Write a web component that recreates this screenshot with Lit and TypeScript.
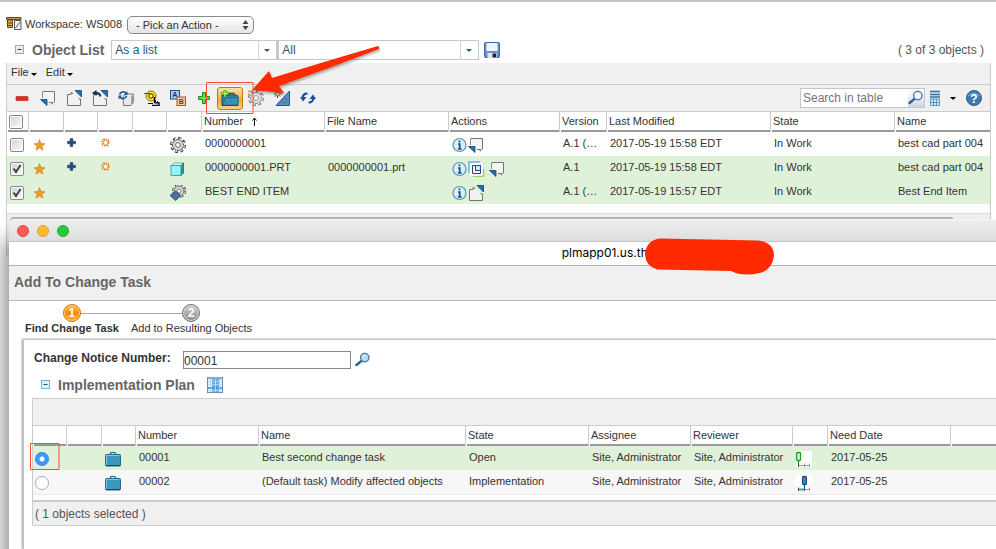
import { LitElement, html, svg, css, nothing } from "lit";
import { customElement, property } from "lit/decorators.js";

const pageIn = svg`<path d="M3 1.5H14.5V12H13L12.5 14H12V12.5H9" fill="none" stroke="#77766a"/><path d="M3.5 2H14V12H8L3.5 8Z" fill="#f4f4f4"/><path d="M2.5 8V1.5" stroke="#8d8c80"/><path d="M0.5 9.5H7V15.5Z" fill="#1d6fb8" stroke="#17436f" stroke-width=".8"/>`;
const pageOut = svg`<path d="M7 3.5H6V2.5H5V4.5H1.5V15.5H14.5V9H13V8" fill="#f1f1f1" stroke="#77766a"/><path d="M9 .5H15.5V7Z" fill="#1d6fb8" stroke="#17436f" stroke-width=".8"/>`;
const gear = svg`<circle cx="8" cy="8" r="6.6" fill="none" stroke="#3a3a3a" stroke-width="2.8" stroke-dasharray="3 2.18"/><circle cx="8" cy="8" r="5.5" fill="#dcdcd8" stroke="#555" stroke-width="1"/><circle cx="8" cy="8" r="6.3" fill="none" stroke="#deded9" stroke-width="1.800" stroke-dasharray="1.600 3.350" stroke-dashoffset="-.7"/><circle cx="8" cy="8" r="2.400" fill="#fff" stroke="#666" stroke-width="1"/>`;
const briefcase = svg`<path d="M5.500 4V2.500Q5.500 1.500 6.500 1.500H9.500Q10.500 1.500 10.500 2.500V4" fill="none" stroke="#1c5a74" stroke-width="1.200"/><rect x=".5" y="3.500" width="15" height="11.500" rx="1" fill="#3f97bd" stroke="#246a88"/><path d="M1.500 14V4.500H14" fill="none" stroke="#86c8e2"/><path d="M1 14.500H15" stroke="#174b62"/>`;
const glass = (lens: string) => svg`<path d="M1.500 13L6.500 8.800" stroke="#2d5f8e" stroke-width="2.400" stroke-linecap="round"/><circle cx="9.800" cy="5.600" r="4.200" fill=${lens} stroke="#3f76aa" stroke-width="1.300"/><path d="M7.500 5.500Q8 3.500 10 3.300" fill="none" stroke="#fff"/>`;

const ICONS: Record<string, unknown> = {
  workspace: svg`<path d="M.5 2.500H15V4.500H.5Z" fill="#c99a4a" stroke="#6b4316"/><path d="M1.500 5H6.500V12.500H1.500Z" fill="#e0aa52" stroke="#6b4316"/><path d="M2 8H6M2 10.500H6" stroke="#6b4316"/><path d="M8.500 5.500H15V14.500H8.500Z" fill="#f3f3f3" stroke="#555"/><path d="M9.500 13L14 7" stroke="#555"/>`,
  collapse: svg`<rect x=".5" y=".5" width="8" height="8" fill="#e2eff6" stroke="#7fb4cd"/><path d="M2.500 4.500H6.500" stroke="#174f7a"/>`,
  save: svg`<rect x=".5" y=".5" width="15" height="15" rx="1" fill="#6d92c6" stroke="#41669c"/><rect x="2.500" y="1" width="11" height="8" fill="#eef3f8"/><rect x="3.500" y="11" width="9" height="5" fill="#dfe5ec"/><rect x="8.500" y="11.500" width="3.500" height="4" fill="#1b2330"/>`,
  minus: svg`<rect x="2" y="6.500" width="12" height="4" rx=".6" fill="#df2b20" stroke="#b51b12" stroke-width=".6"/>`,
  pageIn,
  pageOut,
  undo: svg`${pageOut}<path d="M8.500 6.500Q8 3 3.500 3" fill="none" stroke="#15324d" stroke-width="2"/><path d="M0 3L4.500 0V6Z" fill="#15324d"/>`,
  updateBox: svg`<path d="M5 6.500L8 4H15.500V12L13 15.500H5.500Z" fill="#e9e9e5" stroke="#777"/><path d="M13 7V15L15.500 12V4Z" fill="#a3a39c"/><path d="M1.500 4.500A3.600 3.600 0 0 1 8 3.500M8.500 6A3.600 3.600 0 0 1 2 7" fill="none" stroke="#17528f" stroke-width="1.500"/><path d="M9.500 1V5H6ZM.5 9.500V5.500H4Z" fill="#17528f"/>`,
  tape: svg`<circle cx="7" cy="6" r="5" fill="#ffe600" stroke="#8a7a00"/><circle cx="7" cy="6" r="2.200" fill="#fff8a8" stroke="#222"/><path d="M0 3.500H6" stroke="#665a00"/><path d="M10.500 7V12.500L15 13V15.500H8" fill="none" stroke="#111" stroke-width="1.500"/><path d="M4 13.500H9M11.500 10V12M13.500 11V13" stroke="#111"/>`,
  ab: svg`<rect x=".5" y=".5" width="9" height="8.500" fill="#a9c9e6" stroke="#1e4e86"/><text x="2.200" y="7.400" font-size="7" font-weight="700" font-family="Liberation Sans, sans-serif" fill="#123a6c">A</text><rect x="7" y="7" width="8.500" height="8.500" fill="#f1cfa4" stroke="#96592a"/><text x="8.800" y="14" font-size="7" font-weight="700" font-family="Liberation Sans, sans-serif" fill="#7b3410">B</text>`,
  plus: svg`<path d="M6.500 2.500H9.500V6.500H13.500V9.500H9.500V13.500H6.500V9.500H2.500V6.500H6.500Z" fill="#5de047" stroke="#1c8d15"/>`,
  folderAdd: svg`<path d="M1 5H15Q17 5 17 7V15.500H1Z" fill="#2b7fa8" stroke="#15506f"/><path d="M8 5V3.500H13V5" fill="none" stroke="#15506f" stroke-width="1.400"/><path d="M2.500 14.500L4 8H18L16.500 15H2.500Z" fill="#3a8fb8" stroke="#1f6688" stroke-width=".7"/><path d="M3 0H5V2.500H7.500V4.500H5V7H3V4.500H.5V2.500H3Z" fill="#b8f58a" stroke="#2f9b16" stroke-width=".8"/>`,
  gearNew: svg`<g opacity=".65">${gear}</g><path d="M0 1L2 2M3 0V2M0 4H2M5 1L4 3M1 6L2 5" stroke="#f07b1f" stroke-width="1.200"/>`,
  square: svg`<path d="M15.500 1V15.500H2Z" fill="#5b8cc0" stroke="#2a5590"/><path d="M12 8.500V12H8.500Z" fill="#f0f0f0" stroke="#2a5590"/><path d="M3.500 0V8M0 4H7.500M1 1.500L6 6.500M6 1.500L1 6.500" stroke="#222" stroke-width=".9"/><circle cx="3.500" cy="4" r="1.500" fill="#ffe94a"/>`,
  refresh: svg`<path d="M2.500 8Q3 3.500 7.500 3.500M13.500 8Q13 12.500 8.500 12.500" fill="none" stroke="#164f9c" stroke-width="2.200"/><path d="M0 7H6.500L3 11.500ZM9.500 9H16L13 4.500Z" fill="#164f9c"/>`,
  glass: glass("#f2f8fd"),
  glassFilled: glass("#b7dcf2"),
  views: svg`<rect x="0" y="0" width="10" height="16" fill="#d4e9f6"/><path d="M0 1.500H10M0 4.500H10M0 7H10" stroke="#41708f" stroke-width="1.500"/><path d="M.5 9V15.500H9.500V9ZM3.500 9V16M6.500 9V16M0 12.500H10" fill="none" stroke="#4e9dcb"/>`,
  help: svg`<circle cx="8" cy="8" r="7.500" fill="#3f79ab" stroke="#2b5f90"/><path d="M2 6Q8 1 14 6" fill="none" stroke="#88b4d6"/><text x="8" y="12.500" text-anchor="middle" font-size="12" font-weight="700" font-family="Liberation Sans, sans-serif" fill="#fff">?</text>`,
  star: svg`<path d="M7.500 2.500L9 6.500L13 6.800L9.900 9.300L11 13.200L7.500 11L4 13.200L5.100 9.300L2 6.800L6 6.500Z" fill="#efa02c" stroke="#c37c1e" stroke-width=".6"/>`,
  cross: svg`<path d="M3.200 1.500H5.800V4.200H8.500V6.800H5.800V9.500H3.200V6.800H.5V4.200H3.200Z" fill="#1f4f80" stroke="#143559" stroke-width=".5"/>`,
  sun: svg`<circle cx="4.500" cy="5.500" r="3" fill="#fff6d8" stroke="#ed5a1c" stroke-width="2" stroke-dasharray="1.300 1.050"/><path d="M1 2H2M7 2H8M1 9H2M7 9H8" stroke="#f3a12c"/>`,
  gear,
  cube: svg`<path d="M1 5L4 2H13.500L11 5Z" fill="#d2ffff" stroke="#3e8b8b" stroke-width=".7"/><path d="M11 5L13.500 2V12L11 14.500Z" fill="#2e9ea0" stroke="#1b5556" stroke-width=".7"/><rect x="1" y="4.500" width="10" height="10" fill="#8ef6fa" stroke="#3e8b8b" stroke-width=".8"/>`,
  gearPart: svg`<g transform="translate(2 -1) scale(.88)">${gear}</g><path d="M0 10.500L5.500 6L11 10.500L5.500 15.500Z" fill="#4f6f9f" stroke="#2b4168" stroke-width=".8"/>`,
  info: svg`<circle cx="7.500" cy="8" r="6.500" fill="#d8eefa" stroke="#5b93b5" stroke-width="1.200"/><path d="M7.500 3.500V5.200M6 7H7.700V12M5.800 12H9.600" fill="none" stroke="#174e7d" stroke-width="1.700"/>`,
  visual: svg`<rect x="1" y="1" width="14.500" height="14.500" fill="#fff" stroke="#cfe6f2"/><path d="M1 12V1H12" fill="none" stroke="#62b1ea" stroke-width="1.400"/><path d="M15.500 8V15.500H5" fill="none" stroke="#9bd05b" stroke-width="1.400"/><path d="M4.500 4.500H12.500V12.500H4.500Z" fill="#f5f5f5" stroke="#444"/><rect x="7.500" y="4.500" width="5" height="5" fill="#cfe0ff" stroke="#2343b0"/>`,
  grid: svg`<rect x="0" y="0" width="16" height="16" fill="#e4f0fa"/><path d="M6.500 2V15M10.500 2V15" stroke="#62b0e0" stroke-width="3"/><path d="M0 11H15" stroke="#4a9fd4" stroke-width="2"/><path d="M0 4.500H15M0 7.500H15M0 13.500H15M3.500 2V15M8.500 2V15M12.500 2V15" stroke="#b9d4ea" stroke-width=".8"/><path d="M0 1H16" stroke="#8fa8c9" stroke-width="2"/><path d="M.5 0V16M15.500 0V16M0 15.500H16" stroke="#6c8bb5"/>`,
  briefcase,
  gateOpen: svg`<rect width="16" height="16" fill="#fff"/><path d="M3 14.500H14M8.500 12.500V16M13.500 12.500V16" fill="none" stroke="#999"/><path d="M2.500 9V16" stroke="#1c661c"/><rect x=".7" y="1.500" width="3.800" height="8" rx="1" fill="#d9ffd9" stroke="#16a016" stroke-width="1.300"/>`,
  gateRun: svg`<rect width="16" height="16" fill="#fff"/><path d="M3 14.500H8" stroke="#2fbf62" stroke-width="2"/><path d="M9 14.500H14M13.500 12.500V16" stroke="#999"/><path d="M2.500 12.500V16" stroke="#1c661c"/><path d="M8.500 9V16" stroke="#174a8c"/><rect x="6.600" y="1.500" width="3.800" height="8" rx="1" fill="#5583b8" stroke="#174a8c" stroke-width="1.300"/>`,
};

const SIZES: Record<string, [number, number]> = {
  collapse: [9, 9],
  views: [10, 16],
  folderAdd: [18, 16],
  visual: [21, 16],
};

function icon(name: string) {
  const [w, h] = SIZES[name] ?? [16, 16];
  return html`<svg class="icon" width=${w} height=${h} viewBox="0 0 ${w} ${h}" aria-hidden="true">${ICONS[name]}</svg>`;
}

const base = css`
  * { box-sizing: border-box; }
  .icon { display: block; flex: none; }
  button { display: flex; align-items: center; justify-content: center; padding: 0; border: 0; background: none; font: inherit; color: inherit; }
  h1, h2 { margin: 0; font-size: 14px; line-height: 18px; font-weight: 700; color: #666; white-space: nowrap; }
  input, select { font-family: inherit; margin: 0; border-radius: 0; }
  .caret { border: 3px solid transparent; border-top-color: currentColor; border-bottom: 0; }
  table { width: 100%; border-collapse: separate; border-spacing: 0; table-layout: fixed; background: #fff; }
  th { height: 20px; padding: 0; text-align: left; font-weight: 400; color: #333; border-right: 1px solid #ccc; }
  th:last-child { border-right: 0; }
  .head { display: flex; align-items: center; height: 20px; margin-left: 1px; padding: 1px 0 0 1px; border-bottom: 2px solid #999; line-height: 17px; white-space: nowrap; }
  td { height: 24px; padding: 0 0 0 3px; vertical-align: top; line-height: 22px; color: #333; white-space: nowrap; overflow: hidden; }
  .icons { display: flex; align-items: center; height: 24px; padding-top: 1px; }
  .selected td { background: #dff2d9; }
`;

interface ObjectRow {
  checked: boolean; flags: boolean; kind: string; number: string; file: string;
  actions: string[]; version: string; modified: string; name: string;
}

const OBJECTS: ObjectRow[] = [
  { checked: false, flags: true, kind: "gear", number: "0000000001", file: "", actions: ["info", "pageIn"], version: "A.1 (…", modified: "2017-05-19 15:58 EDT", name: "best cad part 004" },
  { checked: true, flags: true, kind: "cube", number: "0000000001.PRT", file: "0000000001.prt", actions: ["info", "visual", "pageIn"], version: "A.1", modified: "2017-05-19 15:58 EDT", name: "best cad part 004" },
  { checked: true, flags: false, kind: "gearPart", number: "BEST END ITEM", file: "", actions: ["info", "pageOut"], version: "A.1 (…", modified: "2017-05-19 15:57 EDT", name: "Best End Item" },
];

const TOOLS: [string, string][] = [
  ["minus", "Remove"], ["pageIn", "Check out"], ["pageOut", "Check in"], ["undo", "Undo checkout"],
  ["updateBox", "Update"], ["tape", "Measure"], ["ab", "Rename"], ["plus", "Add"],
  ["folderAdd", "Add to change task"], ["gearNew", "New part"], ["square", "New CAD document"], ["refresh", "Refresh"],
];

@customElement("object-list")
export class ObjectList extends LitElement {
  static styles = [base, css`
    :host { display: block; padding: 12px 5px 0 6px; color: #333; }
    .workspace { display: flex; align-items: center; height: 22px; gap: 3px; }
    .workspace label { padding-bottom: 2px; }
    .workspace .icon { margin-bottom: 4px; }
    .workspace .pick { margin-left: 2px; }
    .pick, .combo { position: relative; display: flex; }
    .pick select { appearance: none; width: 127px; height: 18px; padding: 0 8px 1px; border: 1px solid #8b8b8b; border-radius: 5px; background: linear-gradient(#fff, #e4e4e4); color: #333; font-size: 11px; }
    .pick svg { position: absolute; right: 5px; top: 4px; pointer-events: none; }
    .title { display: flex; align-items: center; height: 27px; padding: 0 7px 0 9px; }
    .title h1 { margin: 0 7px 0 8px; }
    .combo select { appearance: none; height: 20px; padding: 0 24px 0 3px; border: 1px solid #c8c8c8; background: #fff; color: #285a74; font-size: 12px; }
    .combo .caret { position: absolute; right: 7px; top: 9px; color: #285a74; }
    .combo::after { content: ""; position: absolute; right: 18px; top: 0; height: 20px; border-left: 1px solid #d5d5d5; }
    .view select { width: 166px; }
    .filter select { width: 202px; border-left-width: 2px; }
    .title .save { margin-left: 5px; }
    .count { margin-left: auto; font-size: 12px; color: #555; }
    .box { border: 1px solid #ccc; border-top: 0; background: #f0f0f0; }
    .menu { display: flex; height: 22px; padding: 0 4px; gap: 9px; border-bottom: 1px solid #ccc; }
    .menu button { gap: 2px; padding-bottom: 4px; }
    .menu .caret { color: #000; margin-top: 5px; }
    .tools { display: flex; align-items: center; height: 27px; padding: 0 8px 0 2px; border-bottom: 1px solid #ccc; }
    .tool { width: 26px; height: 23px; }
    .tool.active { border: 1px solid #b97a1c; border-radius: 3px; background: linear-gradient(#fde3ae, #f6a832 60%, #fdd384); }
    .search { display: flex; margin-left: auto; border: 1px solid #c6c6c6; background: #fff; height: 20px; }
    .search input { width: 107px; padding: 0 2px; border: 0; font-size: 12px; background: none; }
    .search input::placeholder { color: #757575; }
    .search button { width: 16px; background: linear-gradient(#fff, #cfd6e6); }
    .views { margin: 0 10px 0 5px; }
    .tools .caret { color: #000; margin-right: 10px; }
    .check { appearance: none; display: block; width: 14px; height: 14px; border: 1px solid #888; border-radius: 2px; background: linear-gradient(135deg, #d0d0d0, #fff); box-shadow: inset 0 0 0 1px #fff; }
    .tick { display: grid; width: 14px; height: 14px; }
    .tick > * { grid-area: 1 / 1; }
    .tick svg { pointer-events: none; z-index: 1; }
    .sort { margin-left: 8px; }
    .space { height: 10px; background: #fdfdfd; border-bottom: 1px solid #ddd; }
    .scroll { height: 16px; padding: 3px 36px 0 3px; border-bottom: 1px solid #ccc; }
    .thumb { height: 8px; border-radius: 4px; background: #b4b4b4; }
    .foot { height: 24px; }
  `];

  private check(checked: boolean, label: string) {
    return html`<span class="tick"><input class="check" type="checkbox" .checked=${checked} aria-label=${label} />${checked
      ? html`<svg width="14" height="14"><path d="M3.500 6.500L6 10L10.500 3" fill="none" stroke="#444" stroke-width="2"/></svg>` : nothing}</span>`;
  }

  render() {
    const widths = [22, 35, 34, 35, 34, 35, 123, 124, 111, 47, 164, 124];
    const heads = ["", "", "", "", "", "Number", "File Name", "Actions", "Version", "Last Modified", "State", "Name"];
    return html`
      <div class="workspace">
        ${icon("workspace")}
        <label for="action">Workspace: WS008</label>
        <span class="pick">
          <select id="action"><option>- Pick an Action -</option></select>
          <svg width="7" height="10"><path d="M3.500 0L6.500 4H.5ZM3.500 10L6.500 6H.5Z" fill="#444"/></svg>
        </span>
      </div>
      <div class="title">
        <button aria-label="Collapse">${icon("collapse")}</button>
        <h1>Object List</h1>
        <span class="combo view"><select aria-label="View"><option>As a list</option></select><span class="caret"></span></span>
        <span class="combo filter"><select aria-label="Filter"><option>All</option></select><span class="caret"></span></span>
        <button class="save" aria-label="Save">${icon("save")}</button>
        <span class="count">( 3 of 3 objects )</span>
      </div>
      <div class="box">
        <div class="menu">
          <button>File<span class="caret"></span></button>
          <button>Edit<span class="caret"></span></button>
        </div>
        <div class="tools">
          ${TOOLS.map(([name, label]) => html`<button class="tool ${name === "folderAdd" ? "active" : ""}" aria-label=${label}>${icon(name)}</button>`)}
          <span class="search">
            <input type="text" placeholder="Search in table" aria-label="Search in table" />
            <button aria-label="Search">${icon("glass")}</button>
          </span>
          <button class="views" aria-label="Table views">${icon("views")}</button>
          <span class="caret"></span>
          <button aria-label="Help">${icon("help")}</button>
        </div>
        <table>
          <colgroup>${widths.map((w) => html`<col width=${w} />`)}<col /></colgroup>
          <thead><tr>
            <th><span class="head">${this.check(false, "Select all")}</span></th>
            ${heads.map((h) => html`<th><span class="head">${h}${h === "Number"
              ? html`<svg class="sort" width="7" height="9"><path d="M3.500 9V1M1.500 3.500L3.500 1L5.500 3.500" fill="none" stroke="#111"/></svg>` : nothing}</span></th>`)}
          </tr></thead>
          <tbody>${OBJECTS.map((o) => html`
            <tr class=${o.checked ? "selected" : ""}>
              <td><span class="icons">${this.check(o.checked, `Select ${o.number}`)}</span></td>
              <td><span class="icons">${icon("star")}</span></td>
              <td>${o.flags ? html`<span class="icons">${icon("cross")}</span>` : nothing}</td>
              <td>${o.flags ? html`<span class="icons">${icon("sun")}</span>` : nothing}</td>
              <td></td>
              <td><span class="icons">${icon(o.kind)}</span></td>
              <td>${o.number}</td>
              <td>${o.file}</td>
              <td><span class="icons">${o.actions.map(icon)}</span></td>
              <td>${o.version}</td>
              <td>${o.modified}</td>
              <td>In Work</td>
              <td>${o.name}</td>
            </tr>`)}
          </tbody>
        </table>
        <div class="space"></div>
        <div class="scroll"><div class="thumb"></div></div>
        <div class="foot"></div>
      </div>`;
  }
}

const TASKS = [
  { number: "00001", name: "Best second change task", state: "Open", gate: "gateOpen", selected: true },
  { number: "00002", name: "(Default task) Modify affected objects", state: "Implementation", gate: "gateRun", selected: false },
];

@customElement("change-task-window")
export class ChangeTaskWindow extends LitElement {
  static styles = [base, css`
    :host { display: flex; flex-direction: column; background: #fff; color: #333; border-radius: 5px 0 0 0; overflow: hidden; }
    .bar { display: flex; flex: none; align-items: center; gap: 8px; height: 23px; padding-left: 8px; background: linear-gradient(#eee, #dedede); border-top: 1px solid #f8f8f8; border-bottom: 1px solid #c4c4c4; }
    .light { width: 12px; height: 12px; border-radius: 50%; border: 1px solid; }
    .close { background: #fc5b57; border-color: #df4744; }
    .min { background: #fdbc2e; border-color: #de9f34; }
    .max { background: #28c93f; border-color: #1fab2f; }
    .address { flex: none; height: 24px; padding-left: 56%; border-bottom: 1px solid #b0b0b0; font: 12px/22px Inter, sans-serif; color: #000; }
    .banner { flex: none; height: 35px; padding: 7px 5px; background: #f0f0f0; border-bottom: 1px solid #b8b8b8; }
    .steps { display: flex; flex: none; gap: 12px; margin: 0; padding: 3px 16px 0; list-style: none; height: 38px; }
    .step { position: relative; display: flex; flex-direction: column; align-items: center; line-height: 12px; }
    .step.current { font-weight: 700; }
    .ball { position: relative; z-index: 1; display: grid; place-items: center; width: 18px; height: 18px; border-radius: 50%; color: #fff; font-size: 12px; font-weight: 700; border: 1px solid #707070; background: linear-gradient(#cfcfcf, #8b8b8b); box-shadow: inset 0 0 0 1px #ddd; }
    .current .ball { border-color: #d9730b; background: linear-gradient(#fdc05e, #f98a00 50%, #ffb400); box-shadow: inset 0 0 0 1px #fcd28c; }
    .current::after { content: ""; position: absolute; left: 50%; top: 9px; width: 112px; border-top: 1px solid #aaa; }
    .panel { flex: 1; margin-left: 14px; padding: 6px 0 0 8px; border: 1px solid #c4c4c4; border-right: 0; border-bottom: 0; box-shadow: -1px 0 2px #999; }
    .row { display: flex; align-items: center; height: 25px; }
    .notice { padding: 2px 0 0 2px; }
    .notice label { width: 149px; padding-bottom: 3px; font-size: 12px; font-weight: 700; }
    .notice input { width: 168px; height: 18px; padding: 2px 0 0; border: 1px solid #888; font-size: 12px; color: #333; }
    .notice button { margin-left: 4px; }
    .plan { height: 27px; padding-left: 9px; }
    .plan h2 { margin: 0 12px 0 8px; }
    .box { border: 1px solid #ccc; border-right: 0; background: #f0f0f0; }
    .tools { height: 27px; border-bottom: 1px solid #ccc; }
    .alt td { background: #f7f7f7; border-bottom: 1px solid #e8e8e8; }
    .radio { appearance: none; width: 14px; height: 14px; margin: 0 0 0 -1px; border: 1px solid #aaa; border-radius: 50%; background: #fff; }
    .radio:checked { border-color: #2f86ea; background: radial-gradient(circle, #fff 2px, #3b99fc 3px); }
    .foot { height: 30px; border-top: 5px solid #fff; font-size: 12px; line-height: 20px; color: #555; }
    .foot span { display: block; padding: 2px 2px 0; border-top: 2px solid #ccc; }
  `];

  render() {
    const widths = [34, 35, 34, 123, 207, 123, 102, 102, 35, 123];
    const heads = ["", "", "", "Number", "Name", "State", "Assignee", "Reviewer", "", "Need Date", ""];
    return html`
      <div class="bar">
        <button class="light close" aria-label="Close"></button>
        <button class="light min" aria-label="Minimize"></button>
        <button class="light max" aria-label="Zoom"></button>
      </div>
      <div class="address">plmapp01.us.th</div>
      <div class="banner"><h1>Add To Change Task</h1></div>
      <ol class="steps">
        <li class="step current"><span class="ball">1</span><span>Find Change Task</span></li>
        <li class="step"><span class="ball">2</span><span>Add to Resulting Objects</span></li>
      </ol>
      <div class="panel">
        <div class="row notice">
          <label for="notice">Change Notice Number:</label>
          <input id="notice" type="text" .value=${"00001"} />
          <button aria-label="Find">${icon("glassFilled")}</button>
        </div>
        <div class="row plan">
          <button aria-label="Collapse">${icon("collapse")}</button>
          <h2>Implementation Plan</h2>
          <button aria-label="Table view">${icon("grid")}</button>
        </div>
        <div class="box">
          <div class="tools"></div>
          <table>
            <colgroup>${widths.map((w) => html`<col width=${w} />`)}<col /></colgroup>
            <thead><tr>${heads.map((h) => html`<th><span class="head">${h}</span></th>`)}</tr></thead>
            <tbody>${TASKS.map((t) => html`
              <tr class=${t.selected ? "selected" : "alt"}>
                <td><span class="icons"><input class="radio" type="radio" name="task" .checked=${t.selected} aria-label=${t.number} /></span></td>
                <td></td>
                <td><span class="icons">${icon("briefcase")}</span></td>
                <td>${t.number}</td>
                <td>${t.name}</td>
                <td>${t.state}</td>
                <td>Site, Administrator</td>
                <td>Site, Administrator</td>
                <td><span class="icons">${icon(t.gate)}</span></td>
                <td>2017-05-25</td>
                <td></td>
              </tr>`)}
            </tbody>
          </table>
          <div class="foot"><span>( 1 objects selected )</span></div>
        </div>
      </div>`;
  }
}

@customElement("app-root")
export class AppRoot extends LitElement {
  @property({ type: Boolean }) marked = true;

  static styles = css`
    :host { position: relative; display: block; height: 100vh; overflow: hidden; background: #fff; border-top: 2px solid #c4c4c4; box-sizing: border-box; font: 11px/14px "Liberation Sans", Arial, sans-serif; }
    .window { position: absolute; left: 9px; right: 0; top: 217px; bottom: 0; box-shadow: 0 24px 22px 4px rgba(0, 0, 0, 0.5); }
    .marks { position: absolute; left: 0; top: -2px; pointer-events: none; filter: drop-shadow(1px 2px 1px rgba(0, 0, 0, 0.3)); }
    .flat { filter: none; }
  `;

  render() {
    return html`
      <object-list></object-list>
      <change-task-window class="window"></change-task-window>
      ${this.marked ? html`
        <svg class="marks" width="400" height="120" aria-hidden="true">
          <path d="M252 90L269 71L272 78Q330 60 378 46Q380 47 379 49Q330 68 279 86L284 93Z" fill="#ff2a00"/>
        </svg>
        <svg class="marks flat" width="800" height="490" aria-hidden="true">
          <path d="M206.500 82.500H253V113.500H206.500ZM30.500 443.500H59V469.500H30.500Z" fill="none" stroke="#ff4a38"/>
          <path d="M660 238.500L758 240.500Q774 242 774 256Q772 270 760 273Q742 277 731 271L657 269.500Q645 266 645 253Q647 240 660 238.500Z" fill="#ff2a00"/>
        </svg>` : ""}
    `;
  }
}
